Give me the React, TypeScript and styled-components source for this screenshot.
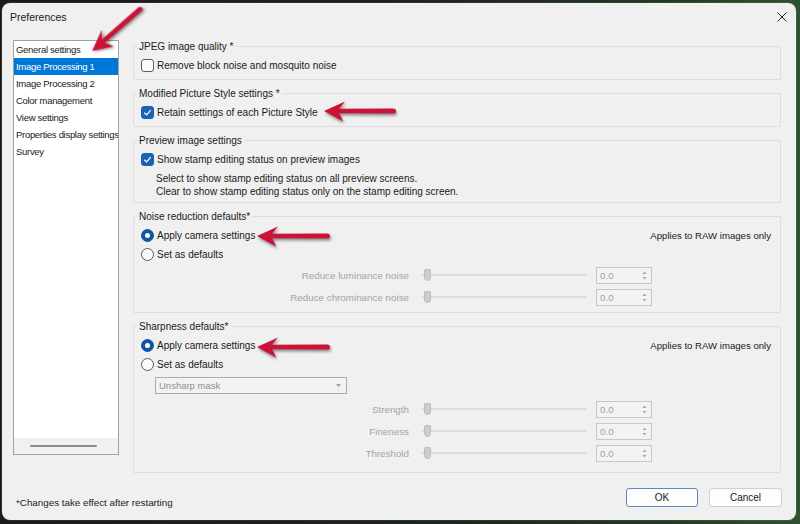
import React from 'react'
import styled, { createGlobalStyle } from 'styled-components'

const GlobalStyle = createGlobalStyle`
  html,
  body {
    margin: 0;
    padding: 0;
    background: #1b1e1b;
  }

  body {
    font-family: 'Liberation Sans', Arial, sans-serif;
    color: #1a1a1a;
  }

  * {
    box-sizing: border-box;
  }
`

const Desktop = styled.div`
  position: relative;
  display: flex;
  width: 800px;
  height: 524px;
  padding: 3px 4px 4px 2px;
  background: linear-gradient(90deg, #191b19 0%, #1d231d 55%, #243a24 85%, #2f5330 100%);
  overflow: hidden;
`

const Window = styled.div`
  flex: 1;
  display: flex;
  flex-direction: column;
  background: #f0f0f0;
  border-radius: 8px;
  box-shadow: 0 0 0 1px rgba(255, 255, 255, 0.08);

  & > * {
    flex-shrink: 0;
  }
`

const TitleBar = styled.div`
  display: flex;
  align-items: center;
  justify-content: space-between;
  height: 28px;
  padding: 0 9px 0 8px;
  font-size: 10.5px;
`

const CloseButton = styled.svg`
  width: 10px;
  height: 10px;
  stroke: #2a2a2a;
  stroke-width: 1;
`

const Body = styled.div`
  display: grid;
  grid-template-columns: 106px 1fr;
  column-gap: 14px;
  align-items: start;
  padding: 9px 15px 0 11px;
`

const CategoryList = styled.div`
  display: flex;
  flex-direction: column;
  height: 415px;
  background: #ffffff;
  border: 1px solid #a2a2a2;
  overflow: hidden;
`

const CategoryItem = styled.div<{ $selected?: boolean }>`
  height: 17px;
  line-height: 17px;
  padding-left: 2px;
  font-size: 9.5px;
  letter-spacing: -0.3px;
  white-space: nowrap;
  color: ${(p) => (p.$selected ? '#ffffff' : '#1a1a1a')};
  background: ${(p) => (p.$selected ? '#0078d7' : 'transparent')};
`

const ListScroll = styled.div`
  display: flex;
  align-items: center;
  height: 16px;
  margin-top: auto;
  padding-left: 16px;
  background: #f0f0f0;
`

const ScrollThumb = styled.div`
  width: 67px;
  height: 2.5px;
  border-radius: 2px;
  background: #8a8a8a;
`

const Content = styled.div`
  display: flex;
  flex-direction: column;
  gap: 7px;
`

const Group = styled.fieldset<{ $padBottom?: number }>`
  margin: 0;
  min-width: 0;
  padding: 3px 9px ${(p) => p.$padBottom ?? 4}px 7px;
  border: 1px solid #dddddd;
  border-radius: 2px;
`

const GroupTitle = styled.legend`
  margin-left: -4px;
  padding: 0 2px;
  font-size: 10px;
  line-height: 13px;
`

const OptionRow = styled.div`
  display: flex;
  align-items: center;
  justify-content: space-between;
  height: 19px;
  font-size: 10px;
`

const Option = styled.label`
  display: flex;
  align-items: center;
  gap: 3px;
`

const CheckBox = styled.span<{ $checked?: boolean }>`
  display: inline-flex;
  align-items: center;
  justify-content: center;
  width: 13px;
  height: 13px;
  border-radius: 3px;
  border: 1px solid ${(p) => (p.$checked ? '#1a62b4' : '#5c5c5c')};
  background: ${(p) => (p.$checked ? '#1a62b4' : '#fbfbfb')};

  svg {
    width: 9px;
    height: 9px;
    stroke: #ffffff;
    stroke-width: 1.4;
    fill: none;
  }
`

const Radio = styled.span<{ $checked?: boolean }>`
  display: inline-flex;
  align-items: center;
  justify-content: center;
  width: 13px;
  height: 13px;
  border-radius: 50%;
  border: 1px solid ${(p) => (p.$checked ? '#0f56a8' : '#5c5c5c')};
  background: ${(p) => (p.$checked ? '#0f56a8' : '#fbfbfb')};

  &::after {
    content: '';
    display: ${(p) => (p.$checked ? 'block' : 'none')};
    width: 5px;
    height: 5px;
    border-radius: 50%;
    background: #ffffff;
  }
`

const Hint = styled.span`
  font-size: 9.6px;
`

const Note = styled.div`
  margin: 3px 0 0 15px;
  font-size: 10px;
  line-height: 13px;
`

const Select = styled.div`
  display: flex;
  align-items: center;
  justify-content: space-between;
  width: 192px;
  height: 17px;
  margin: 3px 0 0 14px;
  padding: 0 5px 0 3px;
  border: 1px solid #acacac;
  background: #f2f2f2;
  font-size: 9.5px;
  color: #8f8f8f;

  svg {
    width: 5px;
    height: 3px;
    fill: #a0a0a0;
  }
`

const Sliders = styled.div<{ $top?: number }>`
  margin-top: ${(p) => p.$top ?? 0}px;
`

const SliderRow = styled.div`
  display: flex;
  align-items: center;
  height: 22px;
  font-size: 10px;
  color: #a4a4a4;
`

const SliderLabel = styled.span`
  width: 268px;
  margin-right: 13px;
  text-align: right;
  font-size: 9.8px;
`

const Track = styled.div`
  position: relative;
  display: flex;
  align-items: center;
  width: 165px;
  height: 12px;
  margin-right: 9px;

  &::before {
    content: '';
    flex: 1;
    height: 2px;
    background: #dcdcdc;
  }
`

const Thumb = styled.span`
  position: absolute;
  left: 2px;
  top: 0;
  width: 7px;
  height: 12px;
  border-radius: 2px 2px 4px 4px;
  background: #cdcdcd;
  border: 1px solid #bdbdbd;
`

const SpinBox = styled.div`
  display: flex;
  align-items: center;
  justify-content: space-between;
  width: 56px;
  height: 17px;
  padding: 0 4px 0 3px;
  border: 1px solid #c8c8c8;
  background: #f3f3f3;
  color: #a2a2a2;
  font-size: 9.8px;

  svg {
    width: 5px;
    height: 9px;
    fill: #a6a6a6;
  }
`

const Footer = styled.div`
  display: flex;
  justify-content: space-between;
  align-items: flex-start;
  padding: 15px 14px 12px 14px;
`

const FooterNote = styled.div`
  padding-top: 9px;
  font-size: 9.8px;
  line-height: 12px;
`

const ButtonRow = styled.div`
  display: flex;
  gap: 11px;
`

const DialogButton = styled.button<{ $primary?: boolean }>`
  width: ${(p) => (p.$primary ? 72 : 73)}px;
  height: 19px;
  padding: 0;
  font-family: inherit;
  font-size: 10px;
  color: #1a1a1a;
  background: #fdfdfd;
  border: 1px solid ${(p) => (p.$primary ? '#5a88c2' : '#d0d0d0')};
  border-radius: 3px;
`

const Annotation = styled.svg<{ $x: number; $y: number; $angle: number }>`
  position: absolute;
  left: ${(p) => p.$x - 2}px;
  top: ${(p) => p.$y - 12}px;
  height: 24px;
  overflow: visible;
  transform-origin: 2px 12px;
  transform: rotate(${(p) => p.$angle}deg);
  filter: drop-shadow(1px 2px 1.5px rgba(0, 0, 0, 0.45));
`

type ArrowProps = { x: number; y: number; angle?: number; length?: number }

const Arrow = ({ x, y, angle = 0, length = 72 }: ArrowProps) => {
  const tail = length + 2
  const d = `M2 0 L23 -9.5 Q19 -4.5 17 -2.2 L${tail - 3} -2.6 Q${tail} -2.6 ${tail} 0 Q${tail} 2.6 ${tail - 3} 2.6 L17 2.2 Q19 5 21 10.5 Z`
  return (
    <Annotation $x={x} $y={y} $angle={angle} width={tail + 2} viewBox={`0 -12 ${tail + 2} 24`}>
      <path d={d} fill="#cc1236" />
    </Annotation>
  )
}

const Check = () => (
  <svg viewBox="0 0 10 10">
    <polyline points="1.5,5.2 4,7.6 8.6,2.4" />
  </svg>
)

const Spinner = () => (
  <svg viewBox="0 0 5 9">
    <path d="M2.5 0.5 L4.5 3 L0.5 3 Z" />
    <path d="M0.5 6 L4.5 6 L2.5 8.5 Z" />
  </svg>
)

const Slider = ({ label }: { label: string }) => (
  <SliderRow>
    <SliderLabel>{label}</SliderLabel>
    <Track>
      <Thumb />
    </Track>
    <SpinBox>
      <span>0.0</span>
      <Spinner />
    </SpinBox>
  </SliderRow>
)

const categories = [
  'General settings',
  'Image Processing 1',
  'Image Processing 2',
  'Color management',
  'View settings',
  'Properties display settings',
  'Survey',
]

export default function App() {
  return (
    <Desktop>
      <GlobalStyle />
      <Window>
        <TitleBar>
          <span>Preferences</span>
          <CloseButton viewBox="0 0 10 10">
            <line x1="0.5" y1="0.5" x2="9.5" y2="9.5" />
            <line x1="9.5" y1="0.5" x2="0.5" y2="9.5" />
          </CloseButton>
        </TitleBar>

        <Body>
          <CategoryList>
            {categories.map((c) => (
              <CategoryItem key={c} $selected={c === 'Image Processing 1'}>
                {c}
              </CategoryItem>
            ))}
            <ListScroll>
              <ScrollThumb />
            </ListScroll>
          </CategoryList>

          <Content>
            <Group>
              <GroupTitle>JPEG image quality *</GroupTitle>
              <OptionRow>
                <Option>
                  <CheckBox />
                  Remove block noise and mosquito noise
                </Option>
              </OptionRow>
            </Group>

            <Group>
              <GroupTitle>Modified Picture Style settings *</GroupTitle>
              <OptionRow>
                <Option>
                  <CheckBox $checked>
                    <Check />
                  </CheckBox>
                  Retain settings of each Picture Style
                </Option>
              </OptionRow>
            </Group>

            <Group>
              <GroupTitle>Preview image settings</GroupTitle>
              <OptionRow>
                <Option>
                  <CheckBox $checked>
                    <Check />
                  </CheckBox>
                  Show stamp editing status on preview images
                </Option>
              </OptionRow>
              <Note>
                Select to show stamp editing status on all preview screens.
                <br />
                Clear to show stamp editing status only on the stamp editing screen.
              </Note>
            </Group>

            <Group>
              <GroupTitle>Noise reduction defaults*</GroupTitle>
              <OptionRow>
                <Option>
                  <Radio $checked />
                  Apply camera settings
                </Option>
                <Hint>Applies to RAW images only</Hint>
              </OptionRow>
              <OptionRow>
                <Option>
                  <Radio />
                  Set as defaults
                </Option>
              </OptionRow>
              <Sliders>
                <Slider label="Reduce luminance noise" />
                <Slider label="Reduce chrominance noise" />
              </Sliders>
            </Group>

            <Group $padBottom={8}>
              <GroupTitle>Sharpness defaults*</GroupTitle>
              <OptionRow>
                <Option>
                  <Radio $checked />
                  Apply camera settings
                </Option>
                <Hint>Applies to RAW images only</Hint>
              </OptionRow>
              <OptionRow>
                <Option>
                  <Radio />
                  Set as defaults
                </Option>
              </OptionRow>
              <Select>
                <span>Unsharp mask</span>
                <svg viewBox="0 0 5 3">
                  <path d="M0 0 L5 0 L2.5 3 Z" />
                </svg>
              </Select>
              <Sliders $top={4}>
                <Slider label="Strength" />
                <Slider label="Fineness" />
                <Slider label="Threshold" />
              </Sliders>
            </Group>
          </Content>
        </Body>

        <Footer>
          <FooterNote>*Changes take effect after restarting</FooterNote>
          <ButtonRow>
            <DialogButton $primary>OK</DialogButton>
            <DialogButton>Cancel</DialogButton>
          </ButtonRow>
        </Footer>
      </Window>

      <Arrow x={92} y={51} angle={-41} length={66} />
      <Arrow x={324} y={111} length={72} />
      <Arrow x={257} y={236} length={73} />
      <Arrow x={257} y={347} length={73} />
    </Desktop>
  )
}
